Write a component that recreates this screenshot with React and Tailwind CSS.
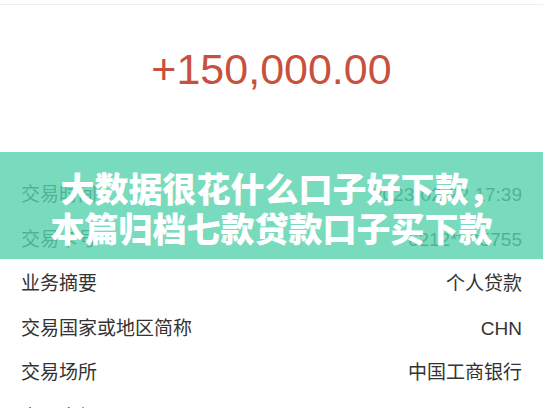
import React from 'react';

const rows = [
  { label: '交易时间', value: '2023-02-22 17:39' },
  { label: '交易卡号', value: '6212****5755' },
  { label: '业务摘要', value: '个人贷款' },
  { label: '交易国家或地区简称', value: 'CHN' },
  { label: '交易场所', value: '中国工商银行' },
  { label: '交易金额', value: '150,000.00' },
];

const App = () => {
  return (
    <div
      className="relative w-[543px] h-[408px] overflow-hidden bg-white"
      style={{ fontFamily: '"Liberation Sans", "Noto Sans CJK SC", sans-serif' }}
    >
      <div className="h-[4px]" />
      <div className="h-px bg-[#ececec]" />

      {/* amount */}
      <div className="h-[168px] flex justify-center pt-[39px]">
        <div className="text-[43px] leading-[50px] text-[#c8503f]">+150,000.00</div>
      </div>

      {/* detail rows */}
      <div>
        {rows.map((r) => (
          <div
            key={r.label}
            className="h-[44.5px] flex items-center justify-between px-[21px] text-[19px] text-[#333333]"
          >
            <span>{r.label}</span>
            <span>{r.value}</span>
          </div>
        ))}
      </div>

      {/* title banner over the list */}
      <div className="absolute left-0 right-0 top-[152px] h-[107px] bg-[#57d2ad]/80 flex flex-col items-center justify-center pt-[4px]">
        <div
          className="text-white text-[34px] leading-[40px] font-black text-center"
          style={{ fontFamily: '"Noto Sans CJK SC", sans-serif' }}
        >
          <div className="pl-[20px]">大数据很花什么口子好下款，</div>
          <div>本篇归档七款贷款口子买下款</div>
        </div>
      </div>
    </div>
  );
};

export default App;
